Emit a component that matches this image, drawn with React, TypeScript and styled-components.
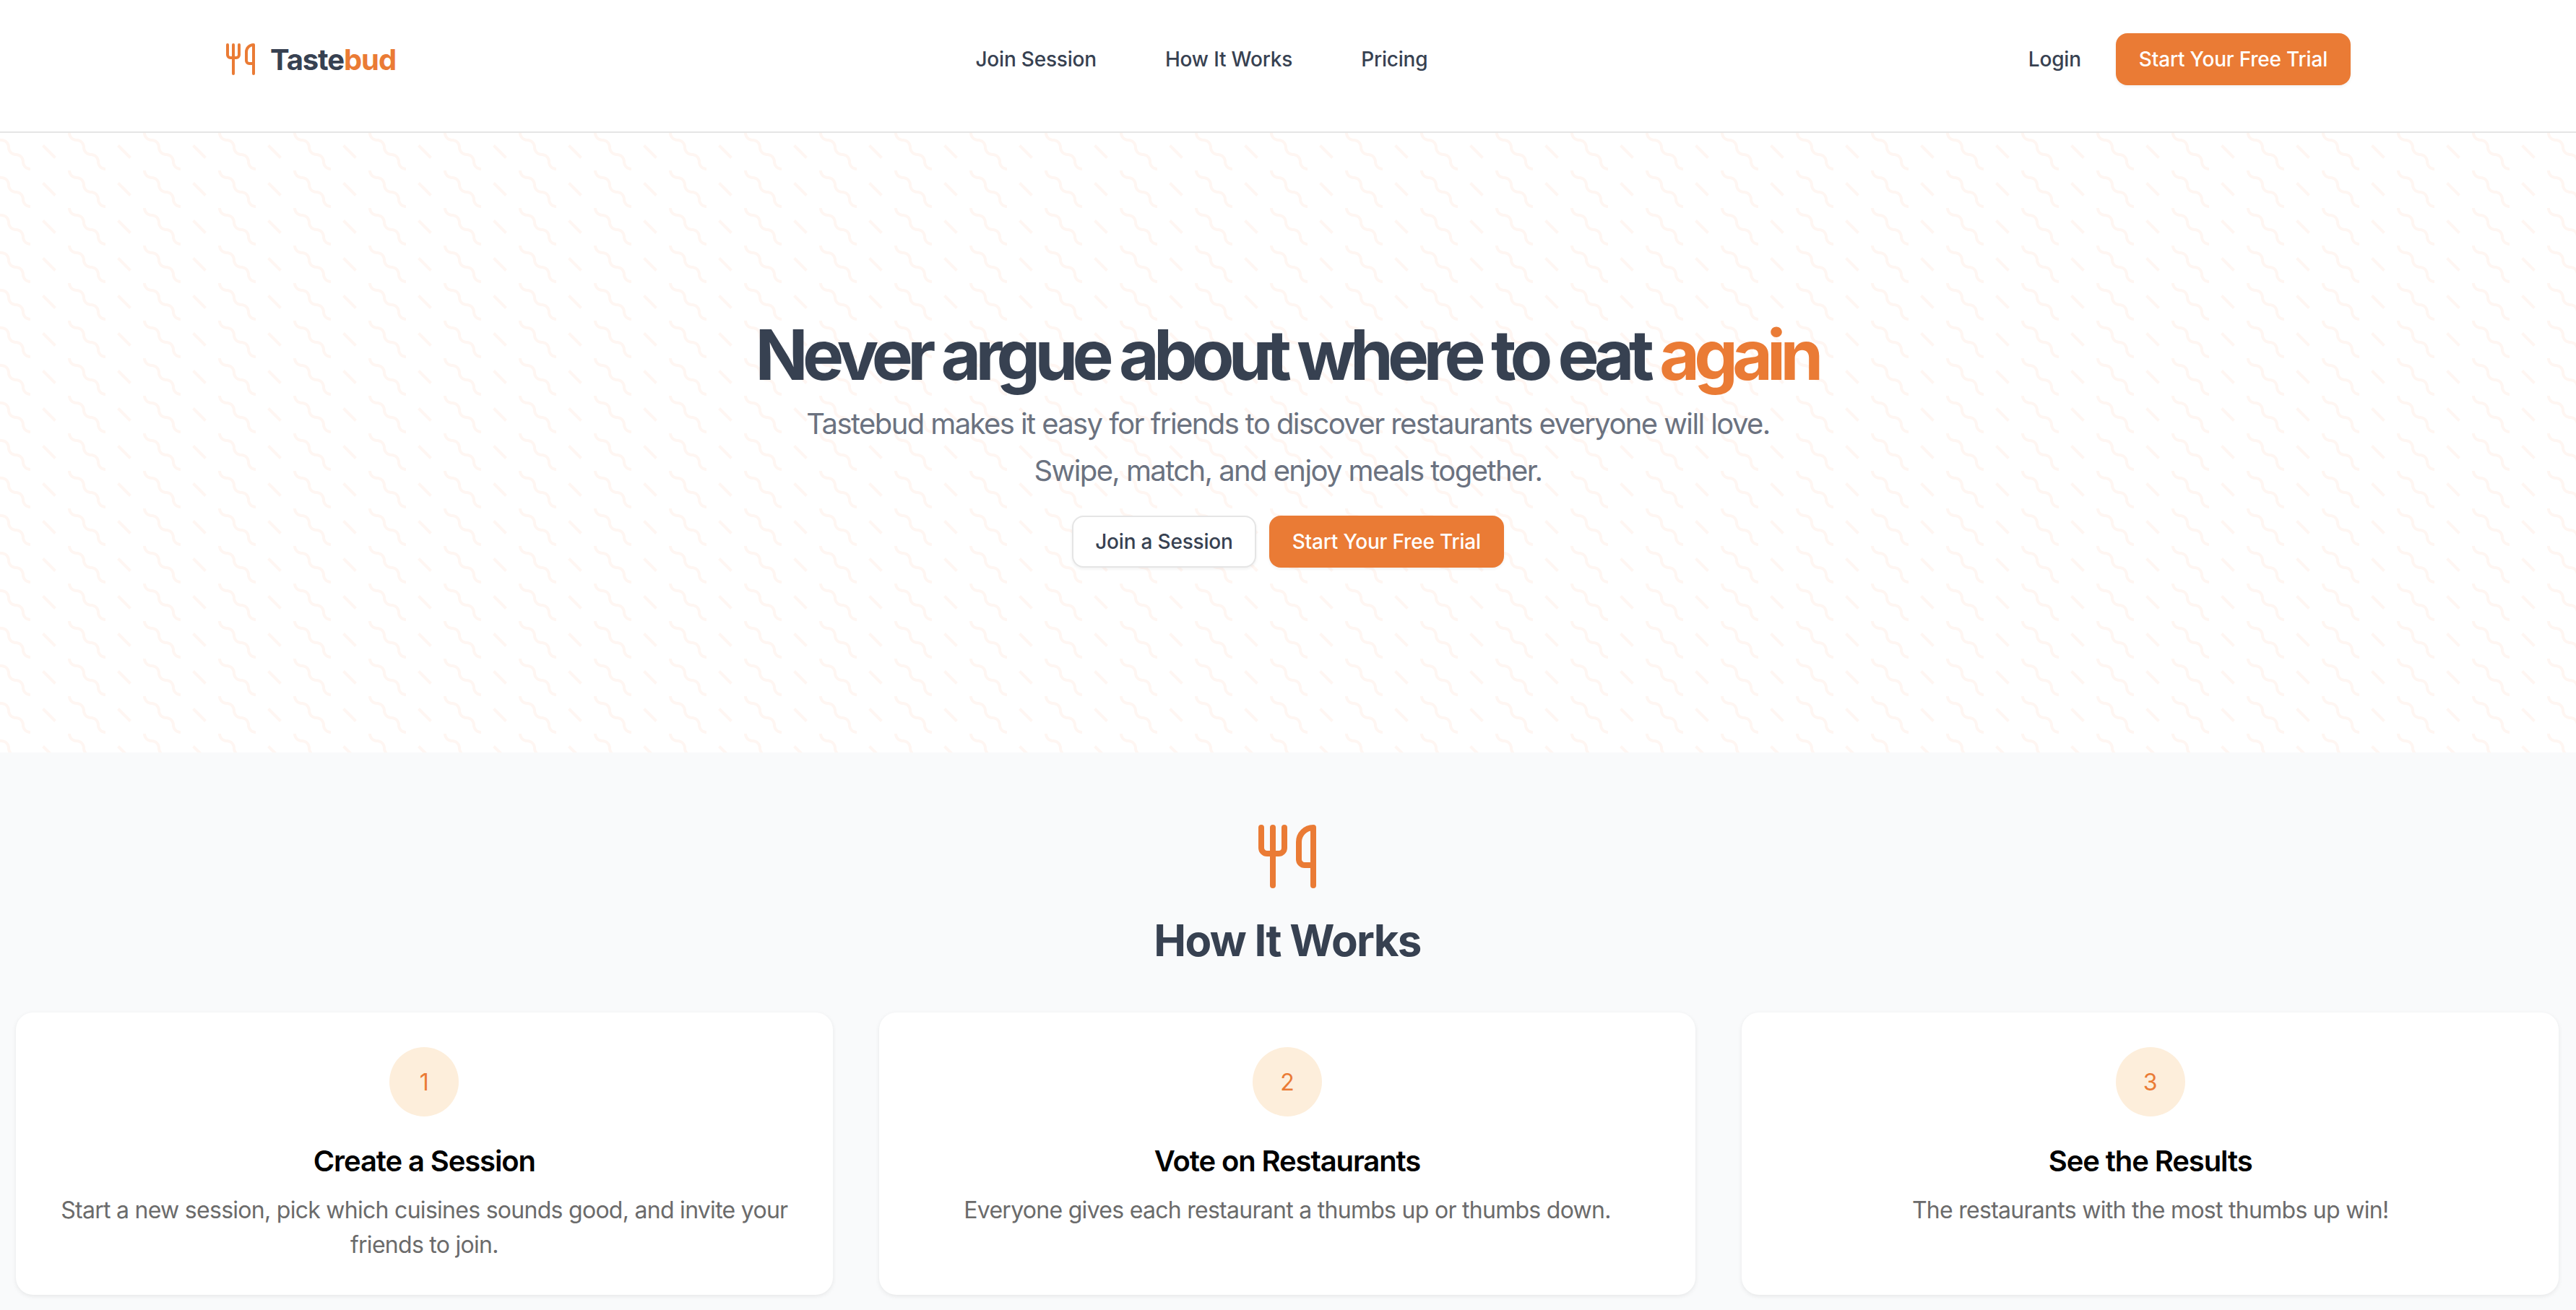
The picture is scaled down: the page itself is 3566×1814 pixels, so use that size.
import React from 'react';
import styled, { createGlobalStyle } from 'styled-components';
import { Utensils } from 'lucide-react';

const orange = '#ea7b35';
const slate = '#374151';
const hairline = '#e5e5e5';

const wiggle = encodeURIComponent(
  `<svg xmlns="http://www.w3.org/2000/svg" width="104" height="52" viewBox="0 0 52 26"><path fill="#fff6f2" d="M10 10c0-2.21-1.79-4-4-4-3.314 0-6-2.686-6-6h2c0 2.21 1.79 4 4 4 3.314 0 6 2.686 6 6 0 2.21 1.79 4 4 4 3.314 0 6 2.686 6 6 0 2.21 1.79 4 4 4v2c-3.314 0-6-2.686-6-6 0-2.21-1.79-4-4-4-3.314 0-6-2.686-6-6zm25.464-1.95l8.486 8.486-1.415 1.415-8.486-8.486 1.415-1.415z"/></svg>`
);

const GlobalStyle = createGlobalStyle`
  html, body {
    margin: 0;
    padding: 0;
    background: #fff;
    font-family: Inter, "Liberation Sans", sans-serif;
  }
  * {
    box-sizing: border-box;
  }
`;

const Page = styled.div`
  width: 3566px;
  height: 1814px;
  overflow: hidden;
  display: flex;
  flex-direction: column;
`;

const Header = styled.header`
  height: 184px;
  flex-shrink: 0;
  padding: 46px 312px 64px 309px;
  border-bottom: 2px solid ${hairline};
  display: flex;
  align-items: center;
  justify-content: space-between;
`;

const Logo = styled.div`
  display: flex;
  align-items: center;
  gap: 17px;
  color: ${orange};
`;

const LogoText = styled.span`
  font-size: 40px;
  font-weight: 700;
  letter-spacing: -1.1px;
  color: ${slate};
`;

const Accent = styled.span`
  color: ${orange};
`;

const Nav = styled.nav`
  display: flex;
  gap: 95px;
  padding-left: 3px;
`;

const NavLink = styled.a`
  font-size: 28px;
  font-weight: 450;
  line-height: 40px;
  letter-spacing: -0.2px;
  color: ${slate};
`;

const HeaderActions = styled.div`
  display: flex;
  align-items: center;
  gap: 16px;
`;

const LoginLink = styled(NavLink)`
  padding: 0 32px;
`;

const Button = styled.button<{ $primary?: boolean }>`
  height: 72px;
  padding: 0 ${props => (props.$primary ? '32px' : '30px')};
  border-radius: 16px;
  border: ${props => (props.$primary ? 'none' : `2px solid ${hairline}`)};
  background: ${props => (props.$primary ? orange : '#fff')};
  color: ${props => (props.$primary ? '#fff' : slate)};
  font-family: inherit;
  font-size: 28px;
  font-weight: 450;
  letter-spacing: -0.2px;
  box-shadow: 0 2px 4px rgba(0, 0, 0, 0.06);
`;

const Hero = styled.section`
  height: 858px;
  flex-shrink: 0;
  padding-top: 259px;
  display: flex;
  flex-direction: column;
  align-items: center;
  background-color: #fff;
  background-image: url("data:image/svg+xml,${wiggle}");
  background-position: -10px 0;
`;

const Headline = styled.h1`
  margin: 0 0 15px;
  padding-right: 4px;
  font-size: 96px;
  line-height: 96px;
  font-weight: 700;
  letter-spacing: -7.75px;
  color: ${slate};
`;

const Lead = styled.p`
  margin: 0 0 30px;
  width: 1500px;
  font-size: 40px;
  line-height: 65px;
  letter-spacing: -1.6px;
  text-align: center;
  color: #6b7280;
`;

const HeroActions = styled.div`
  display: flex;
  align-items: flex-start;
  gap: 18px;
`;

const HowItWorks = styled.section`
  flex: 1;
  padding: 96px 24px 0 22px;
  display: flex;
  flex-direction: column;
  align-items: center;
  background: #f9fafb;
  color: ${orange};
`;

const SectionTitle = styled.h2`
  margin: 32px 0 64px;
  font-size: 60px;
  line-height: 72px;
  font-weight: 700;
  letter-spacing: -1.7px;
  color: ${slate};
`;

const CardGrid = styled.div`
  width: 100%;
  display: grid;
  grid-template-columns: repeat(3, 1fr);
  gap: 64px;
`;

const Card = styled.div`
  height: 391px;
  padding: 48px 46px 0;
  display: flex;
  flex-direction: column;
  align-items: center;
  text-align: center;
  background: #fff;
  border-radius: 24px;
  box-shadow: 0 2px 6px rgba(0, 0, 0, 0.08);
`;

const StepNumber = styled.div`
  width: 96px;
  height: 96px;
  border-radius: 50%;
  display: flex;
  align-items: center;
  justify-content: center;
  background: #fdeedb;
  color: ${orange};
  font-size: 32px;
`;

const CardTitle = styled.h3`
  margin: 34px 0 16px;
  font-size: 40px;
  line-height: 56px;
  font-weight: 600;
  letter-spacing: -1.1px;
  color: #000;
`;

const CardText = styled.p`
  margin: 0;
  font-size: 32px;
  line-height: 48px;
  letter-spacing: -0.72px;
  color: #6b6b6b;
`;

const steps = [
  {
    title: 'Create a Session',
    text: 'Start a new session, pick which cuisines sounds good, and invite your friends to join.',
  },
  {
    title: 'Vote on Restaurants',
    text: 'Everyone gives each restaurant a thumbs up or thumbs down.',
  },
  {
    title: 'See the Results',
    text: 'The restaurants with the most thumbs up win!',
  },
];

export default function App() {
  return (
    <Page>
      <GlobalStyle />
      <Header>
        <Logo>
          <Utensils size={48} />
          <LogoText>
            Taste<Accent>bud</Accent>
          </LogoText>
        </Logo>
        <Nav>
          <NavLink>Join Session</NavLink>
          <NavLink>How It Works</NavLink>
          <NavLink>Pricing</NavLink>
        </Nav>
        <HeaderActions>
          <LoginLink>Login</LoginLink>
          <Button $primary>Start Your Free Trial</Button>
        </HeaderActions>
      </Header>
      <Hero>
        <Headline>
          Never argue about where to eat <Accent>again</Accent>
        </Headline>
        <Lead>
          Tastebud makes it easy for friends to discover restaurants everyone will love.
          <br />
          Swipe, match, and enjoy meals together.
        </Lead>
        <HeroActions>
          <Button>Join a Session</Button>
          <Button $primary>Start Your Free Trial</Button>
        </HeroActions>
      </Hero>
      <HowItWorks>
        <Utensils size={96} />
        <SectionTitle>How It Works</SectionTitle>
        <CardGrid>
          {steps.map((step, index) => (
            <Card key={step.title}>
              <StepNumber>{index + 1}</StepNumber>
              <CardTitle>{step.title}</CardTitle>
              <CardText>{step.text}</CardText>
            </Card>
          ))}
        </CardGrid>
      </HowItWorks>
    </Page>
  );
}
